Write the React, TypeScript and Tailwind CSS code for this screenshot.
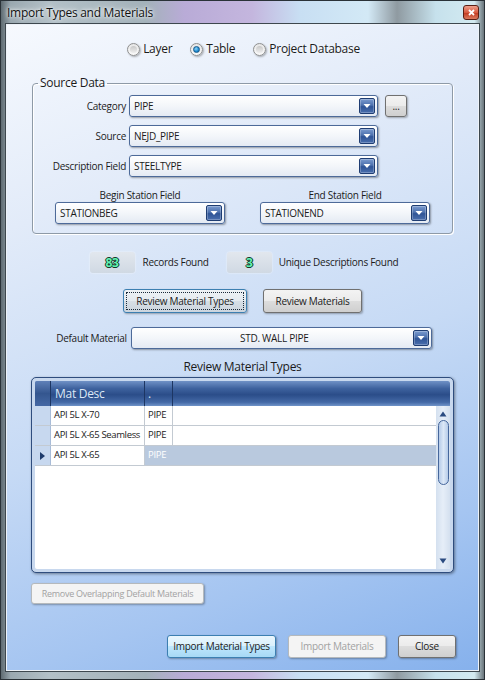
import React from "react";

const ui = "font-['Open_Sans','Noto_Sans',sans-serif] tracking-[-0.28px] whitespace-nowrap";

function DropBtn() {
  return (
    <div className="flex h-[16px] w-[16px] shrink-0 items-center justify-center rounded-[2px] border border-[#1f3d72] bg-[linear-gradient(#7b9bcf,#4c70ad_45%,#2f5496_55%,#4a6fae)] shadow-[inset_0_0_0_1px_rgba(255,255,255,0.25)]">
      <svg width="8" height="6" viewBox="0 0 8 6">
        <path d="M0.5 1 L7.5 1 L4 5 Z" fill="#fff" />
      </svg>
    </div>
  );
}

function Combo({ value, className, center }: { value: string; className: string; center?: boolean }) {
  return (
    <div
      className={`flex h-[22px] items-center rounded-[3px] border border-[#4d6a99] bg-[linear-gradient(#ffffff,#f3f6fa_50%,#e4eaf3)] pl-[4px] pr-[2px] shadow-[1px_1px_2px_rgba(0,0,0,0.35)] ${className}`}
    >
      <span className={`flex-1 text-[10px] text-[#1b1b1b] ${center ? "text-center" : ""}`}>{value}</span>
      <DropBtn />
    </div>
  );
}

function Button({
  label,
  className,
  kind = "normal",
}: {
  label: string;
  className: string;
  kind?: "normal" | "focus" | "hot" | "disabled";
}) {
  const styles = {
    normal:
      "border-[#707070] bg-[linear-gradient(#f3f3f3,#ebebeb_50%,#dddddd_50%,#cfcfcf)] text-[#1b1b1b]",
    focus:
      "border-[#3c7fb1] bg-[linear-gradient(#eef2f5,#e4eaef_50%,#d7dfe6_50%,#ccd5de)] text-[#1b1b1b]",
    hot: "border-[#3c7fb1] bg-[linear-gradient(#eaf6fd,#d9f0fc_50%,#bee6fd_50%,#a7d9f5)] text-[#1b1b1b]",
    disabled: "border-[#b5b9bc] bg-[#f4f4f4] text-[#a2a2a2]",
  };
  return (
    <div
      className={`relative flex items-center justify-center rounded-[3px] border shadow-[1px_1px_2px_rgba(0,0,0,0.3)] ${styles[kind]} ${className}`}
    >
      {kind === "focus" && (
        <div className="pointer-events-none absolute inset-[2px] border border-dotted border-[#1a2a3a]" />
      )}
      {label}
    </div>
  );
}

function Radio({ label, checked }: { label: string; checked?: boolean }) {
  return (
    <div className="flex items-center gap-[3px]">
      <div className="flex h-[13px] w-[13px] items-center justify-center rounded-full border border-[#8e8f8f] bg-[linear-gradient(#e6e6e6,#fafafa)] shadow-[1px_1px_2px_rgba(0,0,0,0.3)]">
        {checked ? (
          <div className="h-[7px] w-[7px] rounded-full border border-[#165a8c] bg-[radial-gradient(circle_at_40%_35%,#8fd4f7,#1c8ad0_60%,#0d5d99)]" />
        ) : (
          <div className="h-[7px] w-[7px] rounded-full bg-[linear-gradient(#c8c8c8,#eeeeee)]" />
        )}
      </div>
      <span className="text-[12px] text-[#1b1b1b] [text-shadow:0_0_4px_#fff]">{label}</span>
    </div>
  );
}

function CountBox({ value }: { value: string }) {
  return (
    <div className="flex h-[21px] w-[45px] items-center justify-center rounded-[3px] bg-[linear-gradient(#e2e7ee,#d0d9e3)] shadow-[0_0_2px_rgba(255,255,255,0.8)]">
      <span className="text-[12px] font-bold text-[#62f2b2] [text-shadow:1px_0_0_#123527,-1px_0_0_#123527,0_1px_0_#123527,0_-1px_0_#123527]">
        {value}
      </span>
    </div>
  );
}

const rows = [
  { desc: "API 5L X-70", type: "PIPE" },
  { desc: "API 5L X-65 Seamless", type: "PIPE" },
  { desc: "API 5L X-65", type: "PIPE", selected: true },
];

function Grid() {
  return (
    <div className="mx-[24px] mt-[3px] h-[196px] rounded-[5px] border border-[#2f4d7e] bg-[#c8d8ee] p-[3px] shadow-[1px_1px_3px_rgba(0,0,0,0.4)]">
      <div className="flex h-full flex-col overflow-hidden rounded-[2px] bg-white">
        {/* header */}
        <div className="flex h-[25px] shrink-0 bg-[linear-gradient(#6f91c6,#3e629e_30%,#2b4d89_55%,#4469a6_85%,#7094c9)] text-[12px] text-[#dde8f6]">
          <div className="w-[16px] border-r border-[#1d3663] bg-[linear-gradient(#5f80b8,#34568f_50%,#4568a4)]" />
          <div className="flex w-[94px] items-center border-r border-[#1d3663] pl-[4px]">Mat Desc</div>
          <div className="flex w-[28px] items-center border-r border-[#1d3663] pl-[3px]">.</div>
          <div className="flex-1" />
        </div>
        <div className="flex min-h-0 flex-1">
          <div className="flex-1">
            {rows.map((r) => (
              <div key={r.desc} className="flex h-[20px] border-b border-[#c3cad2] text-[9.5px]">
                <div className="flex w-[16px] items-center justify-center border-r border-[#a8bcd8] bg-[#c7d8ef]">
                  {r.selected && (
                    <svg width="5" height="8" viewBox="0 0 5 8">
                      <path d="M0 0 L5 4 L0 8 Z" fill="#1d3a6b" />
                    </svg>
                  )}
                </div>
                <div className="flex w-[94px] items-center border-r border-[#c3cad2] pl-[3px] tracking-[-0.35px] text-[#1b1b1b]">
                  {r.desc}
                </div>
                <div
                  className={`flex flex-1 ${r.selected ? "bg-[#b9c9de] text-white" : "text-[#1b1b1b]"}`}
                >
                  <div
                    className={`flex w-[28px] items-center pl-[3px] ${r.selected ? "" : "border-r border-[#c3cad2]"}`}
                  >
                    {r.type}
                  </div>
                </div>
              </div>
            ))}
          </div>
          {/* scrollbar */}
          <div className="flex w-[14px] flex-col items-center bg-[linear-gradient(90deg,#d4e0ef,#e6eef8,#d4e0ef)] pt-[5px] pb-[5px]">
            <svg width="8" height="6" viewBox="0 0 8 6">
              <path d="M4 0.5 L7.5 5.5 L0.5 5.5 Z" fill="#2b4b80" />
            </svg>
            <div className="mt-[3px] h-[65px] w-[11px] rounded-full border border-[#46679c] bg-[linear-gradient(90deg,#b6cbe8,#dce8f7,#b6cbe8)]" />
            <div className="flex-1" />
            <svg width="8" height="6" viewBox="0 0 8 6">
              <path d="M0.5 0.5 L7.5 0.5 L4 5.5 Z" fill="#2b4b80" />
            </svg>
          </div>
        </div>
      </div>
    </div>
  );
}

export default function App() {
  return (
    <div
      className={`${ui} relative h-[680px] w-[485px] overflow-hidden border border-[#2a3238] bg-[linear-gradient(90deg,#5f6b72,#9aa8b0_2%,#b3c0c7_10%,#a3b2ba_30%,#b9abd7_38%,#c4b6de_52%,#c8dff3_62%,#d3e9f6_76%,#8f9aa1_82%,#c6e1ec_90%,#d3eaf1_98%,#6a757b)]`}
    >
      {/* title bar */}
      <div className="flex h-[23px] items-center justify-between pl-[6px] pr-[5px]">
        <span className="text-[12px] text-[#111] [text-shadow:0_0_6px_#fff,0_0_3px_#fff]">
          Import Types and Materials
        </span>
        <div className="flex h-[15px] w-[16px] items-center justify-center rounded-[3px] border border-[#5a1f14] bg-[linear-gradient(#eea08c,#d65a40_50%,#c23c22_55%,#da7a5e)]">
          <svg width="7" height="7" viewBox="0 0 7 7">
            <path d="M1 1 L6 6 M6 1 L1 6" stroke="#fff" strokeWidth="1.8" />
          </svg>
        </div>
      </div>

      {/* content */}
      <div className="mx-[5px] flex h-[647px] flex-col border border-[#edf2f8] bg-[linear-gradient(160deg,#f6f9fe_0%,#e2ebf9_25%,#c6daf5_55%,#a5c5f1_80%,#86b1ec_100%)] shadow-[0_0_0_1px_#3d474e]">
        {/* radios */}
        <div className="mt-[17px] flex h-[14px] items-center justify-center gap-[18px] pl-[2px]">
          <Radio label="Layer" />
          <Radio label="Table" checked />
          <Radio label="Project Database" />
        </div>

        {/* Source Data group */}
        <fieldset className="mx-[25px] mt-[19px] rounded-[4px] border border-[#8e9aa7] pt-[4px] pb-[9px] shadow-[inset_1px_1px_0_#fff,1px_1px_0_#fff]">
          <legend className="ml-[5px] px-[2px] text-[12px] leading-[16px] text-[#1b1b1b]">Source Data</legend>
          {[
            { label: "Category", value: "PIPE", extra: true },
            { label: "Source", value: "NEJD_PIPE" },
            { label: "Description Field", value: "STEELTYPE" },
          ].map((f, i) => (
            <div key={f.label} className={`flex items-center gap-[3px] ${i > 0 ? "mt-[8px]" : ""}`}>
              <span className="w-[93px] text-right text-[10px] text-[#1b1b1b]">{f.label}</span>
              <Combo value={f.value} className="w-[249px]" />
              {f.extra && (
                <Button label="..." className="ml-[4px] h-[22px] w-[22px] text-[10px]" />
              )}
            </div>
          ))}
          <div className="mt-[12px] flex gap-[35px] pl-[22px]">
            <div className="flex w-[170px] flex-col">
              <span className="h-[13px] text-center text-[10px] leading-[13px] text-[#1b1b1b]">
                Begin Station Field
              </span>
              <Combo value="STATIONBEG" className="w-[170px]" />
            </div>
            <div className="flex w-[170px] flex-col">
              <span className="h-[13px] text-center text-[10px] leading-[13px] text-[#1b1b1b]">
                End Station Field
              </span>
              <Combo value="STATIONEND" className="w-[170px]" />
            </div>
          </div>
        </fieldset>

        {/* counts */}
        <div className="mt-[18px] flex h-[21px] items-center justify-center pl-[3px] text-[10px] text-[#1b1b1b]">
          <CountBox value="83" />
          <span className="ml-[8px]">Records Found</span>
          <div className="ml-[18px]">
            <CountBox value="3" />
          </div>
          <span className="ml-[7px]">Unique Descriptions Found</span>
        </div>

        {/* review buttons */}
        <div className="mt-[16px] flex justify-center gap-[16px]">
          <Button label="Review Material Types" kind="focus" className="h-[24px] w-[124px] text-[10px]" />
          <Button label="Review Materials" className="h-[24px] w-[99px] text-[10px]" />
        </div>

        {/* default material */}
        <div className="mt-[14px] flex items-center justify-center gap-[4px] pl-[3px]">
          <span className="text-[10px] text-[#1b1b1b]">Default Material</span>
          <Combo value="STD. WALL PIPE" center className="w-[301px]" />
        </div>

        <div className="mt-[11px] text-center text-[12px] leading-[14px] text-[#1b1b1b]">Review Material Types</div>

        <Grid />

        <div className="mt-[10px] pl-[24px]">
          <Button
            label="Remove Overlapping Default Materials"
            kind="disabled"
            className="h-[21px] w-[173px] text-[9px]"
          />
        </div>

        <div className="mt-[31px] flex justify-end gap-[12px] pr-[22px]">
          <Button label="Import Material Types" kind="hot" className="h-[23px] w-[109px] text-[10px]" />
          <Button label="Import Materials" kind="disabled" className="h-[23px] w-[98px] text-[10px]" />
          <Button label="Close" className="h-[23px] w-[58px] text-[10px]" />
        </div>
      </div>
    </div>
  );
}
